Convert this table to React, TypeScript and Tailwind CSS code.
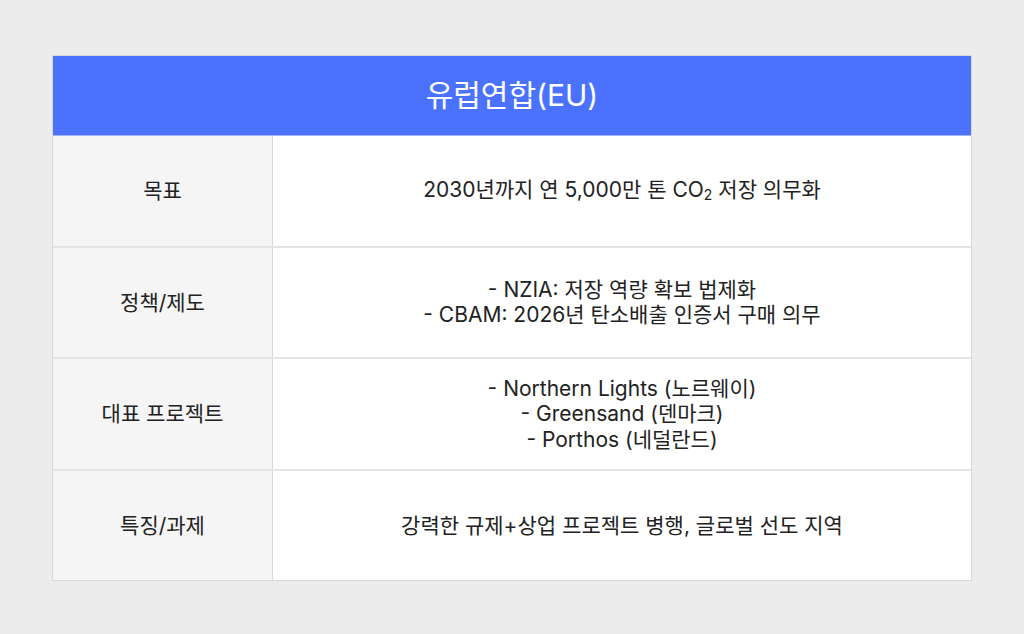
import React from 'react';

const ROWS: { label: string; lines: React.ReactNode[] }[] = [
  {
    label: '목표',
    lines: [
      <>
        2030년까지 연 5,000만 톤 CO<span className="text-[14px] relative top-[3px]">2</span> 저장 의무화
      </>,
    ],
  },
  {
    label: '정책/제도',
    lines: ['- NZIA: 저장 역량 확보 법제화', '- CBAM: 2026년 탄소배출 인증서 구매 의무'],
  },
  {
    label: '대표 프로젝트',
    lines: ['- Northern Lights (노르웨이)', '- Greensand (덴마크)', '- Porthos (네덜란드)'],
  },
  {
    label: '특징/과제',
    lines: ['강력한 규제+상업 프로젝트 병행, 글로벌 선도 지역'],
  },
];

function App() {
  return (
    <div
      className="w-full h-screen bg-[#ececec] flex justify-center pt-[55px]"
      style={{ fontFamily: 'Inter, "Noto Sans CJK KR", sans-serif' }}
    >
      <div className="w-[920px] h-[526px] flex flex-col border border-[#d9d9d9] bg-white">
        <div className="h-[80px] shrink-0 bg-[#4a72ff] border-b border-[#9fb2f5] flex items-center justify-center text-white text-[30px]">
          유럽연합(EU)
        </div>
        {ROWS.map((row, i) => (
          <div
            key={row.label}
            className={`flex flex-1 ${i < ROWS.length - 1 ? 'border-b-2 border-[#e4e4e4]' : ''}`}
          >
            <div className="w-[220px] shrink-0 bg-[#f5f5f5] border-r border-[#d9d9d9] flex items-center justify-center text-[21px] text-[#222]">
              {row.label}
            </div>
            <div className="flex-1 flex flex-col items-center justify-center text-[21px] leading-[25.5px] text-[#222]">
              {row.lines.map((l, j) => (
                <div key={j}>{l}</div>
              ))}
            </div>
          </div>
        ))}
      </div>
    </div>
  );
}

export default App;
